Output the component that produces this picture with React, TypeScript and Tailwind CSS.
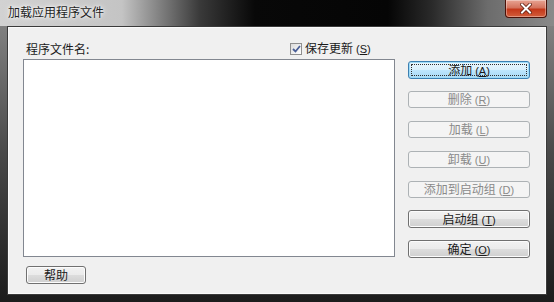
import React from "react";

const font = { fontFamily: '"Noto Sans CJK SC", "Noto Sans", sans-serif' };

function Label({ text, hot }: { text: string; hot?: string }) {
  return (
    <span className="leading-none">
      {text}
      {hot && (
        <span className="ml-[3px] text-[11px] font-['Liberation_Sans',sans-serif]">
          (<span className="underline underline-offset-1">{hot}</span>)
        </span>
      )}
    </span>
  );
}

interface BtnProps {
  text: string;
  hot?: string;
  disabled?: boolean;
  isDefault?: boolean;
  className?: string;
}

function Btn({ text, hot, disabled, isDefault, className = "" }: BtnProps) {
  if (disabled) {
    return (
      <div
        className={`flex h-[17px] items-center justify-center rounded-[3px] border border-[#adb2b5] bg-[#f4f4f4] text-[12px] text-[#8a8a8a] ${className}`}
      >
        <Label text={text} hot={hot} />
      </div>
    );
  }
  if (isDefault) {
    return (
      <div
        className={`relative flex h-[18px] items-center justify-center rounded-[3px] border border-[#3c7fb1] bg-[linear-gradient(to_bottom,#eaf6fd_0%,#d9f0fc_50%,#bee6fd_50%,#a7d9f5_100%)] text-[12px] text-[#1a1a1a] shadow-[inset_0_0_0_1px_#9fdcf8] ${className}`}
      >
        <div className="absolute inset-[2px] rounded-[1px] border border-dotted border-[#303030]" />
        <Label text={text} hot={hot} />
      </div>
    );
  }
  return (
    <div
      className={`flex h-[18px] items-center justify-center rounded-[3px] border border-[#707070] bg-[linear-gradient(to_bottom,#f2f2f2_0%,#ebebeb_50%,#dddddd_50%,#cfcfcf_100%)] text-[12px] text-[#1a1a1a] shadow-[inset_0_0_0_1px_#fcfcfc] ${className}`}
    >
      <Label text={text} hot={hot} />
    </div>
  );
}

export default function App() {
  return (
    <div
      style={font}
      className="flex h-[302px] w-[554px] flex-col bg-[linear-gradient(to_bottom,#8c8c8c_0%,#4a4a4a_50%,#1c1c1c_100%)]"
    >
      {/* title bar */}
      <div className="relative flex h-[26px] shrink-0 items-start bg-[linear-gradient(to_right,#d2d2d2_0%,#c4c4c4_22%,#3a3a3a_36%,#080808_46%,#050505_70%,#2a2a2a_78%,#6c6c6c_88%,#8a8a8a_100%)]">
        <span className="ml-[8px] mt-[6px] text-[12px] leading-none text-[#1e1e1e] [text-shadow:0_0_6px_#ffffff,0_0_3px_#ffffff]">
          加载应用程序文件
        </span>
        <div className="absolute right-[7px] top-0 flex h-[18px] w-[42px] items-center justify-center rounded-b-[4px] border border-t-0 border-[#4a1108] bg-[linear-gradient(to_bottom,#e8a493_0%,#d4735d_45%,#c4381a_55%,#d25e3c_100%)] shadow-[inset_0_0_0_1px_rgba(255,255,255,0.35)]">
          <svg width="12" height="11" viewBox="0 0 12 11">
            <path
              d="M2 1.5 L10 9.5 M10 1.5 L2 9.5"
              stroke="#5a1a0c"
              strokeWidth="3.6"
              strokeLinecap="square"
            />
            <path
              d="M2 1.5 L10 9.5 M10 1.5 L2 9.5"
              stroke="#ffffff"
              strokeWidth="2"
              strokeLinecap="square"
            />
          </svg>
        </div>
      </div>

      {/* client */}
      <div className="mx-[7px] mb-[7px] flex flex-1 border border-[#3a3a3a] bg-[#f0f0f0] shadow-[inset_0_0_0_1px_#fafafa] text-[12px] text-[#1a1a1a]">
        <div className="ml-[15px] flex w-[372px] flex-col">
          <div className="flex h-[32px] items-end pb-[4px]">
            <span className="ml-[3px] w-[264px] leading-none">程序文件名:</span>
            <div className="flex items-center gap-[3px]">
              <div className="flex h-[12px] w-[12px] items-center justify-center border border-[#8f8f8f] bg-[linear-gradient(to_bottom_right,#dcdcdc,#ffffff)]">
                <svg width="9" height="8" viewBox="0 0 9 8">
                  <path
                    d="M1 4 L3.5 6.5 L8 1"
                    stroke="#4a5f97"
                    strokeWidth="1.8"
                    fill="none"
                  />
                </svg>
              </div>
              <Label text="保存更新" hot="S" />
            </div>
          </div>
          <div className="h-[198px] border border-[#828790] bg-white" />
          <Btn text="帮助" className="ml-[3px] mt-[9px] w-[60px]" />
        </div>

        <div className="ml-[13px] mt-[34px] flex w-[122px] flex-col">
          <Btn text="添加" hot="A" isDefault />
          <Btn text="删除" hot="R" disabled className="mt-[12px]" />
          <Btn text="加载" hot="L" disabled className="mt-[13px]" />
          <Btn text="卸载" hot="U" disabled className="mt-[13px]" />
          <Btn text="添加到启动组" hot="D" disabled className="mt-[13px]" />
          <Btn text="启动组" hot="T" className="mt-[12px]" />
          <Btn text="确定" hot="O" className="mt-[12px]" />
        </div>
      </div>
    </div>
  );
}
